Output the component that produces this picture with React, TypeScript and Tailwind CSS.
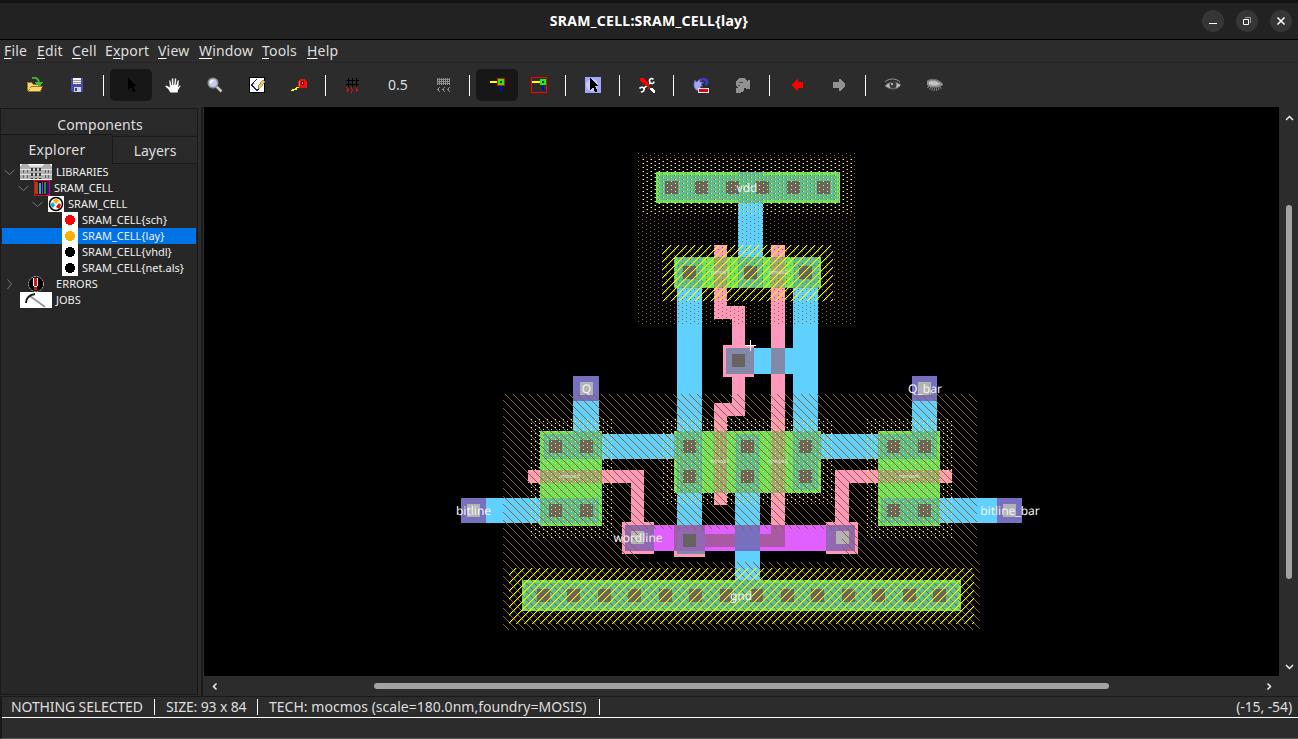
import React from "react";

type R = [number, number, number, number];
const Rects = ({ list, fill }: { list: R[]; fill: string }) => (
  <g fill={fill}>
    {list.map(([x1, y1, x2, y2], i) => (
      <rect key={i} x={x1} y={y1} width={x2 - x1} height={y2 - y1} />
    ))}
  </g>
);
const sq = (xs: number[], ys: number[]): R[] => ys.flatMap((y) => xs.map((x): R => [x, y, x + 13, y + 13]));

const PINK = "#ff99bc";
const METAL1 = "#60d0ff";
const METAL2 = "#df5fff";
const ACTIVE = "#6be35e";
const TEAL = "#5cbd92";
const GATE = "#9ca776";
const CUT = "#676361";
const VIA = "#7670bf";
const LIGHT = "#b3b3b3";

const Layout = () => (
  <svg className="block h-[569px] w-[1075px]" viewBox="204 107 1075 569" shapeRendering="crispEdges">
    <defs>
      <pattern id="slash" width="8" height="8" patternUnits="userSpaceOnUse" x="3">
        <path fill="#ffff00" d="M0 0h1v1H0zM7 1h1v1H7zM6 2h1v1H6zM5 3h1v1H5zM4 4h1v1H4zM3 5h1v1H3zM2 6h1v1H2zM1 7h1v1H1z" />
        <path fill="#ffff00" fillOpacity=".35" d="M1 0h1v1H1zM0 1h1v1H0zM7 2h1v1H7zM6 3h1v1H6zM5 4h1v1H5zM4 5h1v1H4zM3 6h1v1H3zM2 7h1v1H2z" />
      </pattern>
      <pattern id="back" width="8" height="8" patternUnits="userSpaceOnUse" x="7">
        <path fill="#8b6335" d="M0 0h1v1H0zM1 1h1v1H1zM2 2h1v1H2zM3 3h1v1H3zM4 4h1v1H4zM5 5h1v1H5zM6 6h1v1H6zM7 7h1v1H7z" />
      </pattern>
      <pattern id="ydots" width="8" height="4" patternUnits="userSpaceOnUse">
        <path fill="#ffff20" d="M3 3h1v1H3zM7 1h1v1H7z" />
      </pattern>
      <pattern id="bdots" width="8" height="4" patternUnits="userSpaceOnUse">
        <path fill="#8b6335" d="M6 1h1v1H6zM2 3h1v1H2z" />
      </pattern>
    </defs>
    <rect x="204" y="107" width="1075" height="569" fill="#000" />
    <Rects fill={METAL1} list={[[738, 172, 763, 288], [677, 257, 702, 554], [793, 257, 818, 493], [745, 348, 793, 374], [735, 434, 760, 608], [573, 401, 599, 434], [600, 434, 676, 459], [818, 434, 880, 459], [912, 401, 937, 434], [486, 498, 545, 523], [935, 498, 997, 523]]} />
    <Rects fill={PINK} list={[[714, 245, 727, 319], [714, 306, 745, 319], [732, 306, 745, 416], [714, 403, 745, 416], [714, 403, 727, 505], [771, 245, 785, 547], [723, 345, 754, 377], [528, 470, 644, 483], [631, 470, 644, 525], [835, 470, 952, 483], [835, 470, 849, 525], [622, 522, 654, 554], [826, 522, 858, 554], [674, 525, 705, 557]]} />
    <Rects fill={ACTIVE} list={[[656, 172, 840, 203], [674, 257, 821, 288], [674, 431, 821, 493], [540, 431, 602, 526], [878, 431, 940, 526], [522, 580, 961, 611]]} />
    <Rects fill={TEAL} list={[[659, 175, 837, 200], [738, 172, 763, 203], [677, 257, 702, 288], [738, 257, 763, 288], [793, 257, 818, 288], [674, 434, 702, 459], [677, 431, 702, 493], [735, 434, 760, 493], [793, 431, 818, 490], [793, 434, 821, 459], [543, 434, 602, 459], [573, 431, 599, 434], [540, 498, 599, 523], [878, 434, 937, 459], [912, 431, 937, 434], [881, 498, 940, 523], [525, 583, 958, 608], [735, 580, 760, 583]]} />
    <Rects fill={GATE} list={[[714, 257, 727, 288], [771, 257, 785, 288], [714, 431, 727, 493], [771, 431, 785, 493], [540, 470, 602, 483], [878, 470, 940, 483]]} />
    <Rects fill="#8389a8" list={[[726, 348, 754, 374], [771, 348, 785, 374], [677, 551, 705, 554]]} />
    <Rects fill={METAL2} list={[[625, 525, 855, 551]]} />
    <Rects fill="#aa5aa3" list={[[674, 534, 785, 547], [771, 525, 785, 547], [674, 525, 677, 551]]} />
    <Rects fill={VIA} list={[[735, 525, 760, 551], [573, 376, 599, 401], [912, 376, 937, 401], [461, 498, 486, 523], [997, 498, 1022, 523]]} />
    <Rects fill="#9368b3" list={[[625, 525, 654, 551], [826, 525, 855, 551], [677, 525, 705, 551]]} />
    <Rects fill={CUT} list={[...sq([665, 695, 726, 756, 787, 817], [181]), ...sq([683, 744, 799], [266]), ...sq([683, 741, 799], [440, 470]), ...sq([549, 580, 887, 918], [440, 504]), ...sq([732], [354]), ...sq([683], [534]), ...sq([537, 567, 598, 628, 659, 689, 720, 750, 781, 811, 842, 872, 903, 933], [589])]} />
    <Rects fill={LIGHT} list={[...sq([580, 918], [382]), ...sq([467, 1003], [504]), ...sq([631, 836], [531])]} />
    <Rects fill="url(#bdots)" list={[[638, 153, 856, 324]]} />
    <Rects fill="url(#ydots)" list={[[642, 158, 853, 214], [531, 419, 613, 538], [867, 419, 953, 538], [663, 419, 833, 504]]} />
    <path fill="url(#back)" d="M503 394H977V562H980V630H503ZM638 529V562H842V529Z" fillRule="evenodd" />
    <Rects fill="url(#slash)" list={[[662, 245, 833, 301], [509, 568, 974, 624]]} />
    <path d="M745 345.5h11M750.5 340v11" stroke="#fff" />
    <g fill="#f4f4f4" textAnchor="middle" fontFamily="Noto Sans, sans-serif" fontSize="12" textRendering="geometricPrecision">
      <text x="747" y="192">vdd</text>
      <text x="586.5" y="393">Q</text>
      <text x="925" y="393">Q_bar</text>
      <text x="473.5" y="515">bitline</text>
      <text x="1010" y="515">bitline_bar</text>
      <text x="638" y="542">wordline</text>
      <text x="741" y="600">gnd</text>
    </g>
    <g fill="#e2e6da" textAnchor="middle" fontFamily="Noto Sans, sans-serif" fontSize="6">
      <text x="720" y="274">pmos1</text>
      <text x="778" y="274">pmos2</text>
      <text x="720" y="463">nmos1</text>
      <text x="778" y="463">nmos2</text>
      <text x="570" y="478">nmos3</text>
      <text x="909" y="478">nmos4</text>
    </g>
  </svg>
);

const Ic = ({ children, w = 16 }: { children: React.ReactNode; w?: number }) => (
  <svg width={w} height="16" viewBox={`0 0 ${w} 16`} shapeRendering="crispEdges" className="shrink-0">{children}</svg>
);
const Btn = ({ on, children }: { on?: boolean; children: React.ReactNode }) => (
  <div className={on ? "flex h-8 w-[42px] items-center justify-center rounded-[5px] bg-[#171717]" : "flex h-8 w-[42px] items-center justify-center"}>{children}</div>
);
const Sep = () => <div className="w-3 pl-[5px]"><div className="h-[21px] w-px bg-white" /></div>;

const Open = () => <Ic><path fill="#9b7413" d="M0 5h5l1 2h8v2h2l-2 6H1l-1-1z" /><path fill="#f5d978" d="M1 6h4l1 2h7v1H4L2 13H1zM4 10h11l-2 4H2z" /><path d="M5 1c4-1 7 1 7 5" stroke="#3fae2a" strokeWidth="2" fill="none" shapeRendering="auto" /><path fill="#46bd2f" d="M8 5h8l-4 5z" /></Ic>;
const Save = () => <Ic><path fill="#4a4aa8" d="M2 1h12v14H3l-1-1z" /><path fill="#f4f4f4" d="M4 1h8v6H4z" /><path stroke="#9a9aaa" d="M4 3.5h8M4 5.5h8" /><path fill="#cfd0e6" d="M5 10h7v5H5z" /><path fill="#3a3a9e" d="M6 11h2v3H6z" /></Ic>;
const Arrow = ({ bg }: { bg?: boolean }) => <Ic>{bg && <><path fill="#a3a6fb" d="M0 0h16v16H0z" /><circle cx="7" cy="8" r="6" fill="#c8cafe" /></>}<path fill="#000" d="M5 1v12l3-3 2 5h2V13l-2-4h4z" /></Ic>;
const Hand = () => <Ic><path fill="#fff" stroke="#111" strokeWidth=".4" shapeRendering="auto" d="M5.2 15.8 3 12 .3 9.7c-.6-1 .6-1.7 1.6-1.1L4.7 10 4 4c0-1.3 1.5-1.3 1.7 0L6.6 8l.1-6C6.8.7 8.4.7 8.5 2l.3 6L9.7 1.700C10 .5 11.500.7 11.4 2L11 8l1.600-4.500c.4-1 1.700-.6 1.500.5L13.500 10l1-1.500c.6-.8 1.500-.2 1.200.7L13 13.500v2.300z" /></Ic>;
const Mag = () => <Ic><g shapeRendering="auto"><path d="m9.500 9.500 5 5" stroke="#c9c9c9" strokeWidth="2.500" /><circle cx="6" cy="6" r="4.800" fill="#c5cbef" stroke="#8c8c8c" strokeWidth="1.500" /><path d="M3.500 6.500a3 3 0 0 1 3-3" stroke="#fff" strokeWidth="1.500" fill="none" /></g></Ic>;
const Edit = () => <Ic><path fill="#fff" stroke="#000" d="M.5.500h15v15H.500z" /><path d="M8 2 2.500 8 8 13.500 13 8" stroke="#22228c" fill="none" /><path fill="#f0c878" stroke="#7f6528" strokeWidth=".6" d="M14 3 9 9v3l2-1 5-6z" /></Ic>;
const Tape = () => <Ic><path d="M0 13.500h2v-1h3v-1l3-2" stroke="#ffff00" strokeWidth="1.500" fill="none" /><path fill="#ee1010" d="M9 2h4l2 1 1 2v6H8l-1-3V4z" /><path fill="#400" d="M10 4h3v4h-3z" /><path fill="#f66" d="M8 4h1v5H8zM11 5h1v2h-1z" /></Ic>;
const Grid = ({ dense }: { dense?: boolean }) => dense
  ? <svg width="16" height="16" viewBox="-1 0 16 16" shapeRendering="crispEdges"><path stroke="#8c8c8c" d="M1.500 1v7M3.500 1v7M5.500 1v7M7.500 1v7M9.500 1v7M11.500 1v7M13.500 1v7M1 2.500h13M1 4.500h13M1 6.500h13" /><path stroke="#8c8c8c" fill="none" d="m4 10-2 2.500 2 2.500M9 10l-2 2.500 2 2.500M14 10l-2 2.500 2 2.500" /></svg>
  : <Ic><path stroke="#000" d="M3.500 1v9M7.500 1v9M11.500 1v9M1 3.500h13M1 7.500h13" /><path stroke="#e01010" fill="none" d="m1.500 10.500 2 2.500-2 2.500M6 10.500 8 13l-2 2.500M10.500 10.500l2 2.500-2 2.500" /></Ic>;
const Wire = ({ box }: { box?: boolean }) => <svg width="16" height="16" viewBox={box ? "0 0 16 16" : "-1 0 16 16"} shapeRendering="crispEdges">{box && <path d="M.5.500h15v15H.500z" fill="none" stroke="#f00" />}<path fill={box ? "#0000d0" : "#0000ff"} d={box ? "M11 7h2v6h-2z" : "M10 7h2v7h-2z"} /><path fill="#ff0" d={box ? "M1 4h8v2H1z" : "M0 4h7v2H0z"} /><path fill="#f00" d={box ? "" : "M7 1h8v8H7z"} /><path fill="#0f0" d={box ? "M9 2h6v6H9z" : "M8 2h6v6H8z"} /><path fill="#000" d={box ? "M11 4h2v2h-2z" : "M10 4h2v2h-2z"} /></svg>;
const Toolsi = () => <Ic><g shapeRendering="auto"><path d="M11 6 4 12" stroke="#fff" strokeWidth="1.600" /><path d="M14.500 2.500C12 0 9.500 3 11 5.200s4 1.300 4-.7M.5 11.500c2-2 5-1.500 4.700.8S2.500 15.500 2 14.500" stroke="#fff" fill="none" strokeWidth="1.600" /></g><path fill="#f00" d="M1 1h4l5 6v2H8L1 4z" /><path d="m8 8 3 4" stroke="#f00" strokeWidth="2" /><path fill="#fff" d="M11 11h2l3 3v2h-2l-3-3z" /></Ic>;
const Undo = () => <Ic><g shapeRendering="auto"><path d="M7 3.500C10 1 14 2 14 5.500L12.500 8" fill="none" stroke="#3c3cc8" strokeWidth="2.600" /><path fill="#a4a6ee" stroke="#5458c4" strokeWidth=".7" d="M1 6l1-3 1.500 2L7 2v3l3.500.5L8 7.500 10 9H8l-2 5-3-1-2-3z" /></g><rect x="5.500" y="11.500" width="10" height="4" rx="1" fill="#cf1010" stroke="#ffe0e0" /></Ic>;
const Redo = () => <Ic><path fill="#919191" d="M4 1h5l2 1 1 2 2-1h1v9h-3l-2-1H9v2l-2 2-2 1H1v-5h2L1 8V4z" /><path stroke="#4c4c4c" d="M4 5.500h4M3 8.500h2" /></Ic>;
const Go = ({ right }: { right?: boolean }) => <Ic>{right ? <path fill="#929292" d="M1 5h6V2h1l5 5v2l-5 5H7v-3H1z" transform="translate(1 0)" /> : <path fill="#f00" d="M3 7l5-5h1v3h5v6H9v3H8L3 9z" />}</Ic>;
const Eye = ({ shut }: { shut?: boolean }) => <Ic><g shapeRendering="auto">{shut
  ? <><path fill="#909090" d="M0 4c4-3 9-2 15 2l1 2-4 2C8 11 3 11 0 8z" /><path fill="#c4c4c4" d="M2 5c4-2 7-1 11 2-4 2-8 2-11 0z" /><path d="M1 9.500c4 4 9 4 13 .5" stroke="#858585" strokeDasharray="1 1.200" strokeWidth="3" fill="none" /><path d="M0 4c5-3 11-2 15.500 2.500" stroke="#6a6a6a" fill="none" /></>
  : <><path d="M0 5c4-4 11-4 15 0" stroke="#999" fill="none" /><path fill="#bcbcbc" stroke="#656565" d="M0 9c4-5 11-5 16-1-4 5-11 5-16 1z" /><circle cx="8" cy="8" r="3.500" fill="#373d38" /><circle cx="7" cy="7" r="1" fill="#ddd" /></>}</g></Ic>;

const Chev = ({ open }: { open: boolean }) => <svg width="14" height="16" viewBox="0 0 14 16" className="shrink-0"><path d={open ? "m2.500 6 5 4.500 5-4.500" : "m5.500 3.500 4 4.500-4 5"} stroke="#777" fill="none" /></svg>;

const Building = () => <Ic w={32}><path fill="#fff" d="M0 0h32v16H0z" /><path fill="#b0b0b0" d="M0 2l3-2h4l3 2h12l3-2h4l3 2v14H0z" /><path fill="#e4e4e4" d="M10 1h12v2H10zM0 5h32v1H0zM0 10h32v1H0z" /><path stroke="#3a3a3a" strokeWidth="2" strokeDasharray="3 2" d="M12 4v11M16 4v11M20 4v11" /><path stroke="#666" strokeDasharray="3 2" d="M3.500 6v9M7.500 6v9M25.500 6v9M28.500 6v9" /><path stroke="#fff" d="M0 15.500h32" /></Ic>;
const Books = () => <Ic><path fill="#101030" stroke="#f00" d="M.5.500h15v15H.500z" /><path fill="#934d12" d="M1 2h3v12H1z" /><path fill="#16b6d6" d="M5 3h2v11H5z" /><path fill="#c020c0" d="M8 2h1v12H8z" /><path fill="#10a028" d="M10 2h2v12h-2z" /><path fill="#1010e0" d="M13 1h2v14h-2z" /></Ic>;
const CellI = () => <Ic><path fill="#fff" d="M0 0h16v16H0z" /><g shapeRendering="auto"><circle cx="8" cy="8" r="6.500" fill="#fff" stroke="#000" strokeWidth="1.500" /><path fill="#ffb000" d="m8 2 3 3-3 3-3-3z" /><path fill="#12a8d8" d="m5 6 2 3-2 3-3-3z" /><path fill="#e00" d="m11 7 2 2-2 4-3-2z" /></g></Ic>;
const Dot = ({ c }: { c: string }) => <Ic><path fill="#fff" d="M0 0h16v16H0z" /><path fill={c} d="M6 3h4v1h2v2h1v4h-1v2h-2v1H6v-1H4v-2H3V6h1V4h2z" /></Ic>;
const Err = () => <Ic w={32}><g shapeRendering="auto"><circle cx="16" cy="8" r="7.500" fill="#000" stroke="#ddd" strokeWidth=".8" strokeDasharray="2 1" /></g><path fill="#fff" d="M13 2h5v8h-1v4h-3v-4h-1z" /><path fill="#e01010" d="M14 2h3v8h-3zM14 11h3v3h-3z" /></Ic>;
const Pick = () => <Ic w={32}><path fill="#fff" d="M0 0h32v16H0z" /><g shapeRendering="auto" fill="none"><path d="m10 4 15 11" stroke="#97978a" strokeWidth="1.800" /><path d="M6 11c0-5 3-8 9-9" stroke="#142020" strokeWidth="2" /></g></Ic>;

const Row = ({ pad, chev, icon, text, sel, gap }: { pad: string; chev?: boolean; icon: React.ReactNode; text: string; sel?: boolean; gap: string }) => (
  <div className={`flex h-4 items-center ${pad} ${sel ? "bg-[#0073e6]" : ""}`}>
    <div className="w-[18px] shrink-0">{chev !== undefined && <Chev open={chev} />}</div>
    {icon}
    <span className={`font-['Noto_Sans',sans-serif] text-[11px] leading-4 whitespace-nowrap text-[#eee] ${gap}`}>{text}</span>
  </div>
);

const menus: [string, string, string, string][] = [
  ["", "F", "ile", "w-[33px]"], ["", "E", "dit", "w-[35px]"], ["", "C", "ell", "w-[33px]"], ["E", "x", "port", "w-[53px]"],
  ["", "V", "iew", "w-[41px]"], ["", "W", "indow", "w-[63px]"], ["", "T", "ools", "w-[45px]"], ["", "H", "elp", "w-[40px]"],
];
const Win = ({ children }: { children: React.ReactNode }) => <div className="flex size-[22px] items-center justify-center rounded-full bg-[#363636]"><svg width="10" height="10" viewBox="0 0 10 10" fill="none" stroke="#fff">{children}</svg></div>;
const Tip = ({ d }: { d: string }) => <svg width="9" height="9" viewBox="0 0 9 9" fill="none" stroke="#eee" strokeWidth="1.500"><path d={d} /></svg>;
const VBar = () => <div className="h-4 w-px bg-white" />;

export default function App() {
  return (
    <div className="flex h-[739px] w-[1298px] flex-col overflow-hidden bg-[#2c2c2c] font-['Noto_Sans',sans-serif] text-[#dedede]">
      <header className="relative flex h-10 shrink-0 items-center justify-end gap-3 border-t-[3px] border-b border-t-[#131313] border-b-black bg-[#222] pr-1.5">
        <h1 className="absolute inset-0 text-center text-[14px] leading-[35px] font-bold tracking-[0.28px] text-white">SRAM_CELL:SRAM_CELL{"{lay}"}</h1>
        <Win><path d="M1 7.500h8" /></Win>
        <Win><path d="M1.500 3.500h5v5h-5z" /><path d="M3 1.500h5.500V7" stroke="#999" /></Win>
        <Win><path d="m1.500 1.500 7 7m0-7-7 7" strokeWidth="1.500" /></Win>
      </header>
      <nav className="flex h-[23px] shrink-0 items-center border-b border-[#262626] pb-0.5 pl-1 text-[14px] tracking-[0.18px]">
        {menus.map(([a, u, b, w]) => (
          <span key={u} className={`${w} shrink-0 whitespace-nowrap`}>{a}<span className="underline decoration-white underline-offset-2">{u}</span>{b}</span>
        ))}
      </nav>
      <div className="flex h-11 shrink-0 items-center pl-3.5">
        <Btn><Open /></Btn><Btn><Save /></Btn><Sep />
        <Btn on><Arrow /></Btn><Btn><Hand /></Btn><Btn><Mag /></Btn><Btn><Edit /></Btn><Btn><Tape /></Btn><Sep />
        <Btn><Grid /></Btn><span className="w-12 pb-0.5 text-center text-[14px]">0.5</span><Btn><Grid dense /></Btn><Sep />
        <Btn on><Wire /></Btn><Btn><Wire box /></Btn><Sep />
        <Btn><Arrow bg /></Btn><Sep />
        <Btn><Toolsi /></Btn><Sep />
        <Btn><Undo /></Btn><Btn><Redo /></Btn><Sep />
        <Btn><Go /></Btn><Btn><Go right /></Btn><Sep />
        <Btn><Eye /></Btn><Btn><Eye shut /></Btn>
      </div>
      <main className="flex h-[589px] shrink-0">
        <aside className="mt-px mb-px flex w-[198px] flex-col border border-[#191919] bg-[#272727]">
          <div className="flex h-[25px] items-end justify-center overflow-hidden bg-[#2a2a2a] pl-0.5 text-[14px] leading-[18px] tracking-[0.1px]">Components</div>
          <div className="flex h-[30px] shrink-0 text-[14px]">
            <div className="w-[111px] border-t border-[#191919] pl-px text-center leading-[30px] tracking-[0.25px]">Explorer</div>
            <div className="mt-0.5 h-7 flex-1 border border-r-0 border-[#191919] bg-[#2a2a2a] text-center leading-7">Layers</div>
          </div>
          <div className="flex flex-col px-px">
            <Row pad="pl-0" chev icon={<Building />} text="LIBRARIES" gap="ml-1 tracking-[-0.1px]" />
            <Row pad="pl-[14px]" chev icon={<Books />} text="SRAM_CELL" gap="ml-1" />
            <Row pad="pl-[28px]" chev icon={<CellI />} text="SRAM_CELL" gap="ml-1" />
            <Row pad="pl-[42px]" icon={<Dot c="#f00" />} text="SRAM_CELL{sch}" gap="ml-1" />
            <Row pad="pl-[42px]" icon={<Dot c="#ffb000" />} text="SRAM_CELL{lay}" gap="ml-1" sel />
            <Row pad="pl-[42px]" icon={<Dot c="#000" />} text="SRAM_CELL{vhdl}" gap="ml-1" />
            <Row pad="pl-[42px]" icon={<Dot c="#000" />} text="SRAM_CELL{net.als}" gap="ml-1" />
            <Row pad="pl-0" chev={false} icon={<Err />} text="ERRORS" gap="ml-1 tracking-[0.1px]" />
            <Row pad="pl-0" icon={<Pick />} text="JOBS" gap="ml-1" />
          </div>
        </aside>
        <div className="mx-[3px] mr-px w-0.5 bg-[#1b1b1b]" />
        <section className="flex flex-col">
          <Layout />
          <div className="flex h-5 w-[1075px] items-center pr-[5px] pl-1.5">
            <Tip d="M6.500 1.500 3.500 4.500l3 3" />
            <div className="ml-[155px] h-[6px] w-[735px] rounded-full bg-[#a3a3a3]" />
            <div className="ml-auto flex"><Tip d="m2.500 1.500 3 3-3 3" /></div>
          </div>
        </section>
        <div className="flex h-[569px] w-[19px] flex-col items-center pt-[7px] pb-[5px] pl-0.5">
          <Tip d="M1 6 4.500 2.500 8 6" />
          <div className="mt-[82px] mr-px h-[374px] w-[6px] rounded-full bg-[#a3a3a3]" />
          <div className="mt-auto flex"><Tip d="M1 3l3.500 3.500L8 3" /></div>
        </div>
      </main>
      <footer className="flex h-[43px] shrink-0 flex-col border-t border-t-[#191919] border-b border-b-[#555] border-l-2 border-l-[#191919]">
        <div className="flex h-[21px] items-center border-b border-white pl-[9px] text-[14px] leading-5 whitespace-nowrap">
          <span className="w-[143px] tracking-[-0.12px]">NOTHING SELECTED</span><VBar />
          <span className="w-[102px] pl-[11px] tracking-[-0.15px]">SIZE: 93 x 84</span><VBar />
          <span className="w-[341px] pl-[11px] tracking-[0.02px]">TECH: mocmos (scale=180.0nm,foundry=MOSIS)</span><VBar />
          <span className="ml-auto pr-1.5 tracking-[-0.1px]">(-15, -54)</span>
        </div>
      </footer>
    </div>
  );
}
